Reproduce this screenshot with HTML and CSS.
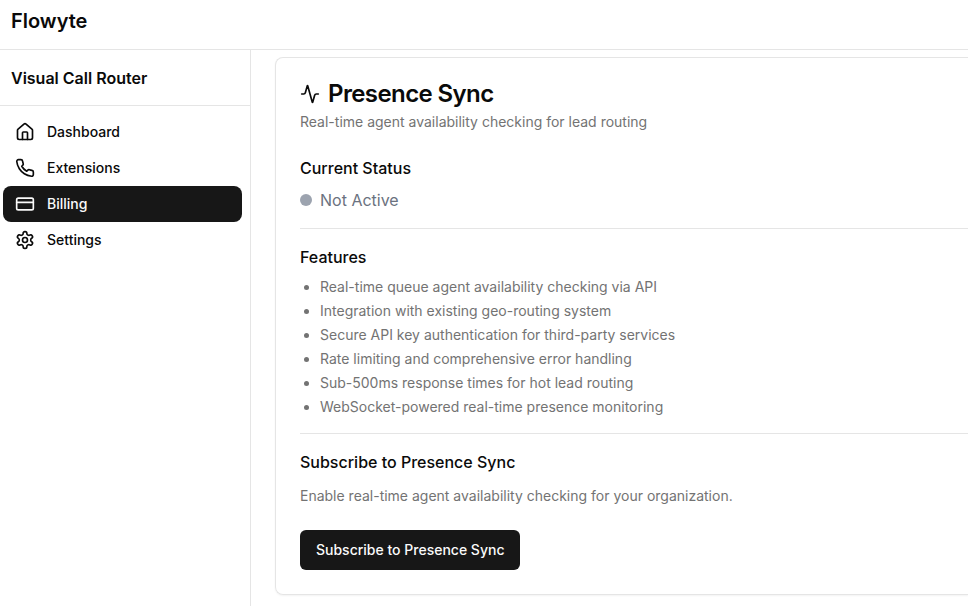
FILE: index.html
```html
<!DOCTYPE html>
<html lang="en">
<head>
  <meta charset="UTF-8">
  <meta name="viewport" content="width=device-width, initial-scale=1.0">
  <title>Flowyte</title>
  <link rel="stylesheet" href="styles.css">
</head>
<body>
  <header class="topbar">
    <h1 class="brand">Flowyte</h1>
  </header>

  <div class="layout">
    <!-- Sidebar -->
    <aside class="sidebar">
      <h2 class="sidebar-title">Visual Call Router</h2>
      <nav class="nav">
        <a class="nav-item" href="#">
          <svg class="icon" viewBox="0 0 24 24"><path d="M15 21v-8a1 1 0 0 0-1-1h-4a1 1 0 0 0-1 1v8"/><path d="M3 10a2 2 0 0 1 .709-1.528l7-5.999a2 2 0 0 1 2.582 0l7 5.999A2 2 0 0 1 21 10v9a2 2 0 0 1-2 2H5a2 2 0 0 1-2-2z"/></svg>
          <span>Dashboard</span>
        </a>
        <a class="nav-item" href="#">
          <svg class="icon" viewBox="0 0 24 24"><path d="M22 16.92v3a2 2 0 0 1-2.18 2 19.79 19.79 0 0 1-8.63-3.07 19.5 19.5 0 0 1-6-6 19.79 19.79 0 0 1-3.07-8.67A2 2 0 0 1 4.11 2h3a2 2 0 0 1 2 1.72 12.84 12.84 0 0 0 .7 2.81 2 2 0 0 1-.45 2.11L8.09 9.91a16 16 0 0 0 6 6l1.27-1.27a2 2 0 0 1 2.11-.45 12.84 12.84 0 0 0 2.81.7A2 2 0 0 1 22 16.92z"/></svg>
          <span>Extensions</span>
        </a>
        <a class="nav-item active" href="#">
          <svg class="icon" viewBox="0 0 24 24"><rect width="20" height="14" x="2" y="5" rx="2"/><path d="M2 10h20"/></svg>
          <span>Billing</span>
        </a>
        <a class="nav-item" href="#">
          <svg class="icon" viewBox="0 0 24 24"><path d="M12.22 2h-.44a2 2 0 0 0-2 2v.18a2 2 0 0 1-1 1.73l-.43.25a2 2 0 0 1-2 0l-.15-.08a2 2 0 0 0-2.73.73l-.22.38a2 2 0 0 0 .73 2.73l.15.1a2 2 0 0 1 1 1.72v.51a2 2 0 0 1-1 1.74l-.15.09a2 2 0 0 0-.73 2.73l.22.38a2 2 0 0 0 2.73.73l.15-.08a2 2 0 0 1 2 0l.43.25a2 2 0 0 1 1 1.73V20a2 2 0 0 0 2 2h.44a2 2 0 0 0 2-2v-.18a2 2 0 0 1 1-1.73l.43-.25a2 2 0 0 1 2 0l.15.08a2 2 0 0 0 2.73-.73l.22-.39a2 2 0 0 0-.73-2.73l-.15-.08a2 2 0 0 1-1-1.74v-.5a2 2 0 0 1 1-1.74l.15-.09a2 2 0 0 0 .73-2.73l-.22-.38a2 2 0 0 0-2.73-.73l-.15.08a2 2 0 0 1-2 0l-.43-.25a2 2 0 0 1-1-1.73V4a2 2 0 0 0-2-2z"/><circle cx="12" cy="12" r="3"/></svg>
          <span>Settings</span>
        </a>
      </nav>
    </aside>

    <!-- Billing content -->
    <main class="content">
      <section class="card">
        <h2 class="card-title">
          <svg class="icon" viewBox="0 0 24 24"><path d="M22 12h-2.48a2 2 0 0 0-1.93 1.46l-2.35 8.36a.25.25 0 0 1-.48 0L9.24 2.18a.25.25 0 0 0-.48 0l-2.35 8.36A2 2 0 0 1 4.49 12H2"/></svg>
          Presence Sync
        </h2>
        <p class="card-description">Real-time agent availability checking for lead routing</p>

        <div class="block">
          <h3>Current Status</h3>
          <div class="status">
            <span class="status-dot"></span>
            <span>Not Active</span>
          </div>
        </div>

        <div class="block">
          <h3>Features</h3>
          <ul class="features">
            <li>Real-time queue agent availability checking via API</li>
            <li>Integration with existing geo-routing system</li>
            <li>Secure API key authentication for third-party services</li>
            <li>Rate limiting and comprehensive error handling</li>
            <li>Sub-500ms response times for hot lead routing</li>
            <li>WebSocket-powered real-time presence monitoring</li>
          </ul>
        </div>

        <div class="block">
          <h3>Subscribe to Presence Sync</h3>
          <p class="subscribe-text">Enable real-time agent availability checking for your organization.</p>
          <button class="subscribe-btn">Subscribe to Presence Sync</button>
        </div>
      </section>
    </main>
  </div>
</body>
</html>
```
FILE: styles.css
```css
* {
  box-sizing: border-box;
}

body {
  margin: 0;
  height: 100vh;
  display: flex;
  flex-direction: column;
  overflow: hidden;
  background-color: #ffffff;
  color: #0a0a0a;
  font-family: Inter, "Liberation Sans", sans-serif;
  font-size: 16px;
  line-height: 24px;
}

h1, h2, h3, p, ul {
  margin: 0;
}

.icon {
  width: 20px;
  height: 20px;
  flex-shrink: 0;
  fill: none;
  stroke: currentColor;
  stroke-width: 2;
  stroke-linecap: round;
  stroke-linejoin: round;
}

/* Top bar */
.topbar {
  height: 50px;
  flex-shrink: 0;
  padding: 7px 11px;
  border-bottom: 1px solid #e5e5e5;
}

.brand {
  font-size: 20px;
  font-weight: 600;
  line-height: 28px;
}

.layout {
  display: flex;
  flex: 1;
  min-height: 0;
}

/* Sidebar */
.sidebar {
  width: 251px;
  flex-shrink: 0;
  border-right: 1px solid #e5e5e5;
}

.sidebar-title {
  padding: 16px 11px 15px;
  border-bottom: 1px solid #e5e5e5;
  font-size: 16px;
  font-weight: 600;
}

.nav {
  padding: 8px 8px 8px 3px;
}

.nav-item {
  display: flex;
  align-items: center;
  gap: 12px;
  height: 36px;
  padding: 0 12px;
  border-radius: 8px;
  color: #0a0a0a;
  font-size: 14px;
  font-weight: 500;
  line-height: 20px;
  text-decoration: none;
}

.nav-item.active {
  background-color: #171717;
  color: #fafafa;
}

/* Card, open on the right side */
.content {
  flex: 1;
  padding: 7px 0 0 24px;
}

.card {
  padding: 24px 0 24px 24px;
  border: 1px solid #e5e5e5;
  border-right: none;
  border-radius: 8px 0 0 8px;
  box-shadow: 0 1px 2px rgba(0, 0, 0, 0.05);
}

.card-title {
  display: flex;
  align-items: center;
  gap: 8px;
  font-size: 24px;
  font-weight: 600;
  line-height: 24px;
  letter-spacing: -0.6px;
}

.card-description {
  margin: 6px 0 24px;
  color: #737373;
  font-size: 14px;
  line-height: 20px;
}

/* Sections split by a line */
.block + .block {
  margin-top: 16px;
  padding-top: 16px;
  border-top: 1px solid #e5e5e5;
}

.block h3 {
  margin-bottom: 8px;
  font-size: 16px;
  font-weight: 500;
}

.status {
  display: flex;
  align-items: center;
  gap: 8px;
  color: #6b7280;
}

.status-dot {
  width: 12px;
  height: 12px;
  border-radius: 50%;
  background-color: #9ca3af;
}

.features {
  padding-left: 20px;
  color: #737373;
  font-size: 14px;
  line-height: 20px;
}

.features li + li {
  margin-top: 4px;
}

.subscribe-text {
  margin: 12px 0 24px;
  color: #737373;
  font-size: 14px;
  line-height: 20px;
}

.subscribe-btn {
  display: block;
  height: 40px;
  padding: 10px 16px;
  border: none;
  border-radius: 6px;
  background-color: #171717;
  color: #fafafa;
  font-family: inherit;
  font-size: 14px;
  font-weight: 500;
  line-height: 20px;
  cursor: pointer;
}
```
